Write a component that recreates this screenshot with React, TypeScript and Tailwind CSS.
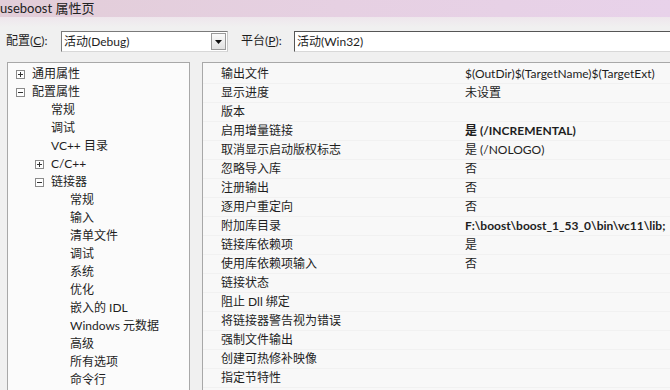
import React from "react"

const font = { fontFamily: 'Lato, "Noto Sans CJK SC", sans-serif' }

interface TreeItem {
  label: string
  level: number
  toggle?: "+" | "-"
}

const tree: TreeItem[] = [
  { label: "通用属性", level: 0, toggle: "+" },
  { label: "配置属性", level: 0, toggle: "-" },
  { label: "常规", level: 1 },
  { label: "调试", level: 1 },
  { label: "VC++ 目录", level: 1 },
  { label: "C/C++", level: 1, toggle: "+" },
  { label: "链接器", level: 1, toggle: "-" },
  { label: "常规", level: 2 },
  { label: "输入", level: 2 },
  { label: "清单文件", level: 2 },
  { label: "调试", level: 2 },
  { label: "系统", level: 2 },
  { label: "优化", level: 2 },
  { label: "嵌入的 IDL", level: 2 },
  { label: "Windows 元数据", level: 2 },
  { label: "高级", level: 2 },
  { label: "所有选项", level: 2 },
  { label: "命令行", level: 2 },
]

const props: { name: string; value?: string; bold?: boolean }[] = [
  { name: "输出文件", value: "$(OutDir)$(TargetName)$(TargetExt)" },
  { name: "显示进度", value: "未设置" },
  { name: "版本" },
  { name: "启用增量链接", value: "是 (/INCREMENTAL)", bold: true },
  { name: "取消显示启动版权标志", value: "是 (/NOLOGO)" },
  { name: "忽略导入库", value: "否" },
  { name: "注册输出", value: "否" },
  { name: "逐用户重定向", value: "否" },
  { name: "附加库目录", value: "F:\\boost\\boost_1_53_0\\bin\\vc11\\lib;", bold: true },
  { name: "链接库依赖项", value: "是" },
  { name: "使用库依赖项输入", value: "否" },
  { name: "链接状态" },
  { name: "阻止 Dll 绑定" },
  { name: "将链接器警告视为错误" },
  { name: "强制文件输出" },
  { name: "创建可热修补映像" },
  { name: "指定节特性" },
]

function Toggle({ sign }: { sign: "+" | "-" }) {
  return (
    <span className="w-[9px] h-[9px] border border-[#8a8a8a] bg-white flex items-center justify-center mr-[7px] shrink-0">
      <svg width="7" height="7" viewBox="0 0 7 7">
        <line x1="1" y1="3.5" x2="6" y2="3.5" stroke="#333" strokeWidth="1" />
        {sign === "+" && <line x1="3.5" y1="1" x2="3.5" y2="6" stroke="#333" strokeWidth="1" />}
      </svg>
    </span>
  )
}

export default function App() {
  return (
    <div className="w-[670px] h-[390px] overflow-hidden bg-[#f0f0f0] text-[12px] text-[#1e1e1e] flex flex-col" style={font}>
      {/* Title bar */}
      <div className="h-[17px] shrink-0 bg-gradient-to-r from-[#e2cdd8] via-[#e6d0e2] to-[#e8d2ea] flex items-center text-[13px] text-[#222] leading-none">
        useboost 属性页
      </div>
      <div className="h-[10px] shrink-0 bg-gradient-to-b from-[#eee6ec] to-[#f0f0f0]" />

      {/* Configuration row */}
      <div className="h-[29px] shrink-0 flex items-start pl-[6px]">
        <span className="mt-[5px] w-[55px]">配置(<u>C</u>):</span>
        <div className="w-[167px] h-[21px] mt-[4px] bg-white border border-[#7a7a7a] border-r-[#c8c8c8] border-b-[#d8d8d8] flex items-center justify-between pl-[2px] pr-[1px]">
          <span>活动(Debug)</span>
          <span className="w-[15px] h-[17px] border border-[#9a9a9a] bg-gradient-to-b from-[#fafafa] to-[#e2e2e2] flex items-center justify-center">
            <svg width="7" height="4" viewBox="0 0 7 4"><path d="M0 0h7L3.5 4z" fill="#111" /></svg>
          </span>
        </div>
        <span className="mt-[5px] ml-[13px] w-[53px]">平台(<u>P</u>):</span>
        <div className="flex-1 h-[21px] mt-[4px] bg-white border border-[#555] border-r-0 border-b-[#d8d8d8] flex items-center pl-[2px]">
          活动(Win32)
        </div>
      </div>

      {/* Body */}
      <div className="flex-1 flex pl-[7px] pt-[6px] min-h-0">
        {/* Tree */}
        <div className="w-[183px] shrink-0 bg-[#fbfbfb] border border-[#a8a8a8] border-b-0 pt-[2px] overflow-hidden">
          {tree.map((t, i) => (
            <div
              key={i}
              className={
                "h-[18px] flex items-center " +
                (t.level === 0 ? "pl-[8px]" : t.level === 1 ? (t.toggle ? "pl-[27px]" : "pl-[43px]") : "pl-[62px]")
              }
            >
              {t.toggle && <Toggle sign={t.toggle} />}
              <span>{t.label}</span>
            </div>
          ))}
        </div>

        {/* Property grid */}
        <div className="flex-1 ml-[12px] bg-[#f8f8f8] border-l border-t border-[#a8a8a8] pt-[2px] overflow-hidden">
          {props.map((p, i) => (
            <div key={i} className="h-[19px] flex border-b border-[#f1f1f1]">
              <div className="w-[15px] shrink-0 bg-[#f8f8f8]" />
              <div className="w-[237px] shrink-0 pl-[3px] flex items-center">{p.name}</div>
              <div className={"flex-1 pl-[10px] flex items-center whitespace-nowrap " + (p.bold ? "font-bold" : "")}>
                {p.value}
              </div>
            </div>
          ))}
        </div>
      </div>
    </div>
  )
}
